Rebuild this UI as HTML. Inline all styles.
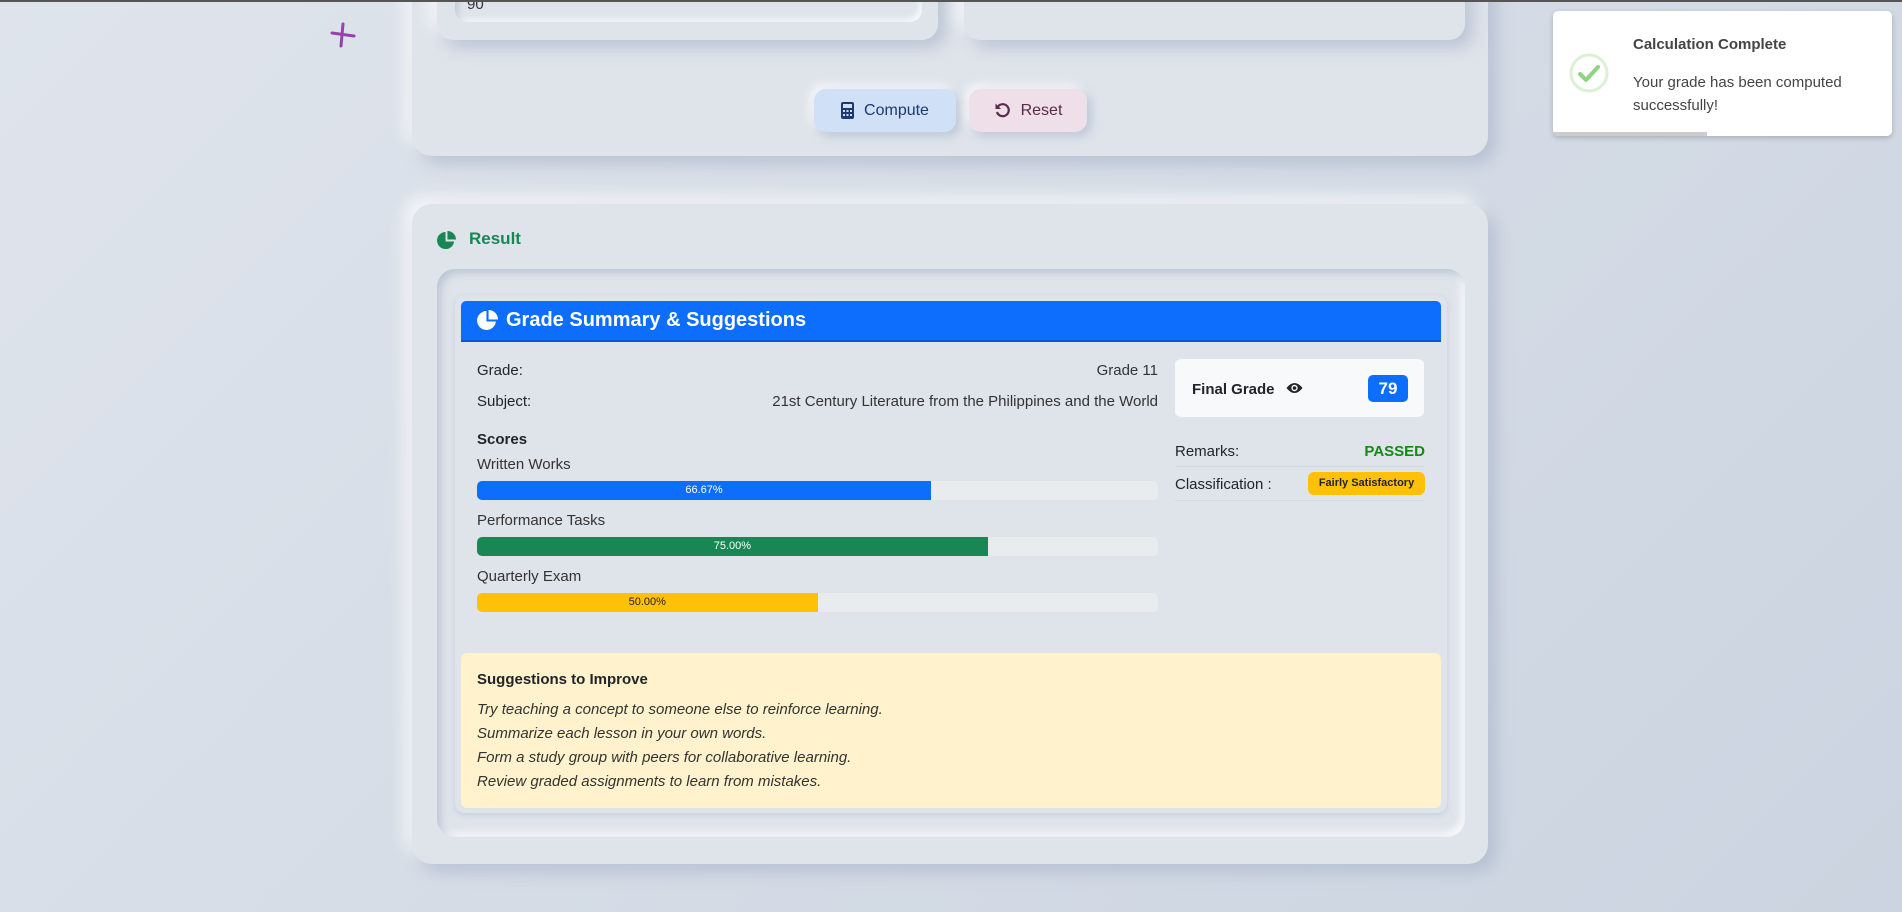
<!DOCTYPE html>
<html><head><meta charset="utf-8"><style>
*{box-sizing:border-box;margin:0;padding:0}
html,body{width:1902px;height:912px;overflow:hidden}
body{font-family:"Liberation Sans",sans-serif;background:linear-gradient(135deg,#dfe4ec 0%,#d5dce6 50%,#cbd4e0 100%);position:relative;color:#212529}
.topline{position:absolute;left:0;top:0;width:1902px;height:2px;background:#555;z-index:10}
.card{position:absolute;background:#dfe4eb;border-radius:20px;box-shadow:8px 8px 16px rgba(163,177,198,.6),-8px -8px 16px rgba(255,255,255,.7)}
.plus{position:absolute;left:330px;top:22px;width:26px;height:26px}
.btn{position:absolute;height:43px;border-radius:12px;display:flex;align-items:center;justify-content:center;gap:10px;font-size:16px;box-shadow:4px 4px 10px rgba(163,177,198,.6),-4px -4px 10px rgba(255,255,255,.8)}
.lbl{position:absolute;font-size:15px}
.bar{position:absolute;left:477px;width:681px;height:19px;background:#e9ecef;border-radius:5px;overflow:hidden}
.bar div{height:100%;color:#fff;font-size:11px;text-align:center;line-height:19px}
</style></head><body>
<div class="topline"></div>
<svg class="plus" viewBox="0 0 26 26"><path d="M13 2 L11 24 M2 11 L24 14" stroke="#9b3fae" stroke-width="3" stroke-linecap="round"/></svg>

<div class="card" style="left:412px;top:-30px;width:1076px;height:186px"></div>
<div class="card" style="left:437px;top:-30px;width:501px;height:70px;border-radius:16px"></div>
<div style="position:absolute;left:455px;top:-20px;width:467px;height:42px;border-radius:12px;background:#dfe4eb;box-shadow:inset 3px 3px 6px rgba(163,177,198,.5),inset -3px -3px 6px rgba(255,255,255,.8)"></div>
<div style="position:absolute;left:467px;top:-4px;font-size:15px;color:#333">90</div>
<div class="card" style="left:964px;top:-30px;width:501px;height:70px;border-radius:16px"></div>

<div class="btn" style="left:814px;top:89px;width:142px;background:#d0e0f6;color:#1c3a6e">
<svg width="13" height="17" viewBox="0 0 13 17"><rect x="0" y="0" width="13" height="17" rx="2" fill="#1c3a6e"/><rect x="2" y="2" width="9" height="4" fill="#d0e0f6"/><g fill="#d0e0f6"><rect x="2" y="8" width="2" height="2"/><rect x="5.5" y="8" width="2" height="2"/><rect x="9" y="8" width="2" height="2"/><rect x="2" y="12" width="2" height="2"/><rect x="5.5" y="12" width="2" height="2"/><rect x="9" y="12" width="2" height="2"/></g></svg>Compute</div>
<div class="btn" style="left:969px;top:89px;width:118px;background:#eedfe8;color:#5a2a4c">
<svg width="17" height="17" viewBox="0 0 17 17"><path d="M4 4.5 A6 6 0 1 1 3 10" fill="none" stroke="#5a2a4c" stroke-width="2.2"/><path d="M1.5 1.5 L1.5 7 L7 7 Z" fill="#5a2a4c"/></svg>Reset</div>

<div class="card" style="left:412px;top:204px;width:1076px;height:660px"></div>
<svg style="position:absolute;left:437px;top:231px" width="19" height="19" viewBox="0 0 20 20"><path d="M9 1 A9 9 0 1 0 18 11 L9 11 Z" fill="#198754"/><path d="M11 0 A9 9 0 0 1 20 9 L11 9 Z" fill="#198754"/></svg>
<div style="position:absolute;left:469px;top:229px;font-size:17px;font-weight:bold;color:#198754">Result</div>

<div style="position:absolute;left:437px;top:269px;width:1028px;height:568px;border-radius:18px;background:#dfe4eb;box-shadow:inset 4px 4px 8px rgba(163,177,198,.6),inset -4px -4px 8px rgba(255,255,255,.8)"></div>
<div style="position:absolute;left:455px;top:295px;width:992px;height:518px;border-radius:10px;background:#dfe4eb;box-shadow:0 2px 6px rgba(163,177,198,.4)"></div>
<div style="position:absolute;left:461px;top:301px;width:980px;height:41px;background:#0d6efd;border-radius:5px 5px 0 0;border-bottom:2px solid #0a58ca;color:#fff;font-weight:bold;font-size:20px;display:flex;align-items:center;padding-left:16px;gap:8px">
<svg width="21" height="21" viewBox="0 0 20 20"><path d="M9 1 A9 9 0 1 0 18 11 L9 11 Z" fill="#fff"/><path d="M11 0 A9 9 0 0 1 20 9 L11 9 Z" fill="#fff"/></svg>Grade Summary &amp; Suggestions</div>

<div class="lbl" style="left:477px;top:362px">Grade:</div>
<div class="lbl" style="right:744px;top:362px;color:#333">Grade 11</div>
<div class="lbl" style="left:477px;top:393px">Subject:</div>
<div class="lbl" style="right:744px;top:393px;color:#333">21st Century Literature from the Philippines and the World</div>
<div class="lbl" style="left:477px;top:431px;font-weight:bold">Scores</div>
<div class="lbl" style="left:477px;top:456px;color:#333">Written Works</div>
<div class="bar" style="top:481px"><div style="width:66.67%;background:#0d6efd">66.67%</div></div>
<div class="lbl" style="left:477px;top:512px;color:#333">Performance Tasks</div>
<div class="bar" style="top:537px"><div style="width:75%;background:#198754">75.00%</div></div>
<div class="lbl" style="left:477px;top:568px;color:#333">Quarterly Exam</div>
<div class="bar" style="top:593px"><div style="width:50%;background:#ffc107;color:#222">50.00%</div></div>

<div style="position:absolute;left:1175px;top:359px;width:249px;height:58px;background:#f8f9fa;border-radius:6px"></div>
<div class="lbl" style="left:1192px;top:381px;font-weight:bold">Final Grade</div>
<svg style="position:absolute;left:1286px;top:381px" width="17" height="14" viewBox="0 0 17 14"><path d="M0.5 7 Q8.5 -3 16.5 7 Q8.5 17 0.5 7Z" fill="#212529"/><circle cx="8.5" cy="7" r="3.2" fill="#f8f9fa"/><circle cx="8.5" cy="7" r="1.8" fill="#212529"/></svg>
<div style="position:absolute;left:1368px;top:375px;width:40px;height:27px;background:#0d6efd;color:#fff;border-radius:5px;font-weight:bold;font-size:17px;text-align:center;line-height:27px">79</div>
<div class="lbl" style="left:1175px;top:443px">Remarks:</div>
<div class="lbl" style="right:477px;top:443px;font-weight:bold;color:#128a12">PASSED</div>
<div style="position:absolute;left:1175px;top:466px;width:249px;height:1px;background:#d4d9e0"></div>
<div class="lbl" style="left:1175px;top:476px">Classification :</div>
<div style="position:absolute;left:1308px;top:472px;width:117px;height:23px;background:#ffc107;border-radius:6px;font-size:11px;font-weight:bold;text-align:center;line-height:23px">Fairly Satisfactory</div>
<div style="position:absolute;left:1175px;top:500px;width:249px;height:1px;background:#d4d9e0"></div>

<div style="position:absolute;left:461px;top:653px;width:980px;height:155px;background:#fff2cc;border-radius:6px"></div>
<div class="lbl" style="left:477px;top:671px;font-weight:bold">Suggestions to Improve</div>
<div style="position:absolute;left:477px;top:698px;font-size:15px;font-style:italic;line-height:24px;color:#333">Try teaching a concept to someone else to reinforce learning.<br>Summarize each lesson in your own words.<br>Form a study group with peers for collaborative learning.<br>Review graded assignments to learn from mistakes.</div>

<div style="position:absolute;left:1553px;top:11px;width:339px;height:125px;background:#fff;border-radius:5px;box-shadow:0 2px 6px rgba(0,0,0,.2);overflow:hidden">
<svg style="position:absolute;left:16px;top:42px" width="40" height="40" viewBox="0 0 40 40"><circle cx="20" cy="20" r="18" fill="none" stroke="#dcf0d4" stroke-width="3"/><path d="M11 21 L17 27 L29 14" fill="none" stroke="#8fd47f" stroke-width="4" stroke-linecap="round" stroke-linejoin="round"/></svg>
<div style="position:absolute;left:80px;top:25px;font-size:15px;font-weight:bold;color:#444">Calculation Complete</div>
<div style="position:absolute;left:80px;top:60px;font-size:15px;color:#444;line-height:23px">Your grade has been computed<br>successfully!</div>
<div style="position:absolute;left:0;bottom:0;width:154px;height:4px;background:#ccc"></div>
</div>
</body></html>
